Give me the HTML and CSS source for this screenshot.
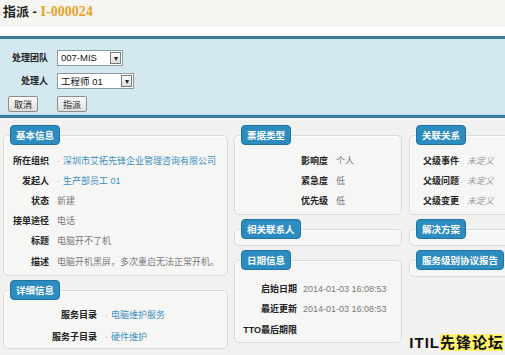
FILE: index.html
```html
<!DOCTYPE html>
<html lang="zh-CN">
<head>
    <meta charset="UTF-8">
    <title>指派 - I-000024</title>
    <link rel="stylesheet" href="styles.css">
</head>
<body>
    <div class="page-head">
        <h1>指派 - <span class="ticket-no">I-000024</span></h1>
    </div>

    <!-- assign panel -->
    <div class="assign-panel">
        <div class="form-row">
            <label class="form-label">处理团队</label>
            <div class="fake-select sel-team">
                <span class="sel-text">007-MIS</span>
                <span class="sel-btn">▾</span>
            </div>
        </div>
        <div class="form-row">
            <label class="form-label">处理人</label>
            <div class="fake-select sel-user">
                <span class="sel-text">工程师 01</span>
                <span class="sel-btn">▾</span>
            </div>
        </div>
        <div class="form-buttons">
            <button class="btn">取消</button>
            <button class="btn">指派</button>
        </div>
    </div>

    <div class="columns">
        <div class="col col-left">
            <div class="card">
                <span class="tab">基本信息</span>
                <div class="card-body grid-basic">
                    <div class="lbl">所在组织</div><div class="val link"><i class="dot">·</i>深圳市艾拓先锋企业管理咨询有限公司</div>
                    <div class="lbl">发起人</div><div class="val link"><i class="dot">·</i>生产部员工 01</div>
                    <div class="lbl">状态</div><div class="val">新建</div>
                    <div class="lbl">接单途径</div><div class="val">电话</div>
                    <div class="lbl">标题</div><div class="val">电脑开不了机</div>
                    <div class="lbl">描述</div><div class="val">电脑开机黑屏，多次重启无法正常开机。</div>
                </div>
            </div>
            <div class="card">
                <span class="tab">详细信息</span>
                <div class="card-body grid-detail">
                    <div class="lbl">服务目录</div><div class="val link"><i class="dot">·</i>电脑维护服务</div>
                    <div class="lbl">服务子目录</div><div class="val link"><i class="dot">·</i>硬件维护</div>
                </div>
            </div>
        </div>

        <div class="col col-mid">
            <div class="card">
                <span class="tab">票据类型</span>
                <div class="card-body grid-type">
                    <div class="lbl">影响度</div><div class="val">个人</div>
                    <div class="lbl">紧急度</div><div class="val">低</div>
                    <div class="lbl">优先级</div><div class="val">低</div>
                </div>
            </div>
            <div class="card">
                <span class="tab">相关联系人</span>
                <div class="card-body empty"></div>
            </div>
            <div class="card">
                <span class="tab">日期信息</span>
                <div class="card-body grid-date">
                    <div class="lbl">启始日期</div><div class="val">2014-01-03 16:08:53</div>
                    <div class="lbl">最近更新</div><div class="val">2014-01-03 16:08:53</div>
                    <div class="lbl">TTO最后期限</div><div class="val"></div>
                </div>
            </div>
        </div>

        <div class="col col-right">
            <div class="card">
                <span class="tab">关联关系</span>
                <div class="card-body grid-rel">
                    <div class="lbl">父级事件</div><div class="val undef">未定义</div>
                    <div class="lbl">父级问题</div><div class="val undef">未定义</div>
                    <div class="lbl">父级变更</div><div class="val undef">未定义</div>
                </div>
            </div>
            <div class="card">
                <span class="tab">解决方案</span>
                <div class="card-body empty"></div>
            </div>
            <div class="card">
                <span class="tab">服务级别协议报告</span>
                <div class="card-body empty"></div>
            </div>
        </div>
    </div>

    <div class="watermark">ITIL<span class="wm-hl">先锋论坛</span></div>
</body>
</html>
```

FILE: styles.css
```css
body {
    margin: 0;
    padding: 0;
    background-color: #f1f1f0;
    font-family: "Liberation Sans", "Noto Sans CJK SC", sans-serif;
    font-size: 9px;
    color: #222;
    width: 505px;
    height: 355px;
    overflow: hidden;
    position: relative;
}

.page-head {
    background-color: #f5f5f1;
    height: 27px;
    border-bottom: 9px solid #ffffff;
}

.page-head h1 {
    margin: 0;
    padding: 3px 0 0 3px;
    font-size: 13px;
    line-height: 17px;
    font-weight: bold;
    color: #222;
}

.ticket-no {
    color: #e8a22a;
    font-family: "Liberation Serif", serif;
    font-size: 14px;
}

/* assign panel */
.assign-panel {
    background-color: #d4e8ef;
    border-top: 3px solid #3b7c9b;
    border-bottom: 3px solid #3b7c9b;
    box-shadow: inset 0 -1px 0 #a9e3f2;
    height: 76px;
    padding: 0 8px;
}

.form-row {
    display: flex;
    align-items: center;
    height: 23px;
}

.form-row:first-child {
    margin-top: 7px;
}

.form-label {
    width: 40px;
    text-align: right;
    font-weight: bold;
    margin-right: 9px;
}

.fake-select {
    display: flex;
    align-items: center;
    height: 14px;
    background: white;
    border: 1px solid #8a9aa6;
}

.sel-team { width: 64px; }
.sel-user { width: 75px; }

.sel-text {
    flex: 1;
    padding-left: 3px;
    font-size: 9.5px;
    color: #111;
}

.sel-btn {
    width: 11px;
    height: 12px;
    margin-right: 1px;
    border: 1px solid #7a7a7a;
    background: linear-gradient(#fdfdfd, #dcdcdc);
    font-size: 8px;
    line-height: 11px;
    text-align: center;
    color: #222;
    box-sizing: border-box;
}

.form-buttons {
    display: flex;
    gap: 19px;
    margin-top: 4px;
}

.btn {
    height: 16px;
    width: 30px;
    padding: 0;
    font-family: inherit;
    font-size: 9px;
    color: #222;
    background: linear-gradient(#fafafa, #dedede);
    border: 1px solid #8c8c8c;
    border-radius: 2px;
}

/* cards */
.columns {
    display: grid;
    grid-template-columns: 225px 168px 104px;
    column-gap: 6px;
    padding: 7px 0 0 3px;
}

.col-right {
    margin-left: 1px;
}

.card {
    margin-bottom: 4px;
}

.tab {
    position: relative;
    z-index: 1;
    display: inline-block;
    margin-left: 7px;
    height: 20px;
    line-height: 20px;
    padding: 0 5px;
    background-color: #2d8cbf;
    border: 1px solid #1f73a3;
    border-radius: 4px;
    color: white;
    font-weight: bold;
    font-size: 9.5px;
    box-sizing: border-box;
}

.card-body {
    margin-top: -10px;
    background-color: #f6f6f5;
    border: 1px solid #dadada;
    border-radius: 5px;
    box-shadow: inset 1px 1px 0 #ffffff;
    display: grid;
    align-items: center;
    column-gap: 8px;
    grid-auto-rows: 20.2px;
    padding: 14px 0 4px;
}

.card-body.empty {
    height: 15px;
    padding: 0;
    margin-bottom: 2px;
}

.lbl {
    text-align: right;
    font-weight: bold;
    white-space: nowrap;
}

.val {
    color: #7a7a7a;
    white-space: nowrap;
}

.link {
    color: #3c8fc0;
}

.dot {
    font-style: normal;
    color: #c6a777;
    margin-right: 3px;
}

.undef {
    font-style: italic;
    color: #999;
}

.grid-basic { grid-template-columns: 45px 1fr; }
.grid-detail {
    grid-template-columns: 93px 1fr;
    grid-auto-rows: 22px;
    padding-top: 12px;
    padding-bottom: 1px;
}
.grid-type { grid-template-columns: 93px 1fr; padding-bottom: 3px; }
.grid-date {
    grid-template-columns: 62px 1fr;
    column-gap: 6px;
    padding-top: 18px;
    padding-bottom: 3px;
}
.grid-rel { grid-template-columns: 49px 1fr; padding-bottom: 3px; }

.card:nth-child(2) .card-body.empty { margin-bottom: 0; }

.watermark {
    position: absolute;
    right: 1px;
    bottom: 3px;
    font-size: 15px;
    font-weight: bold;
    letter-spacing: 1px;
    color: #111;
}

.wm-hl {
    background-color: #fff26b;
}
```
